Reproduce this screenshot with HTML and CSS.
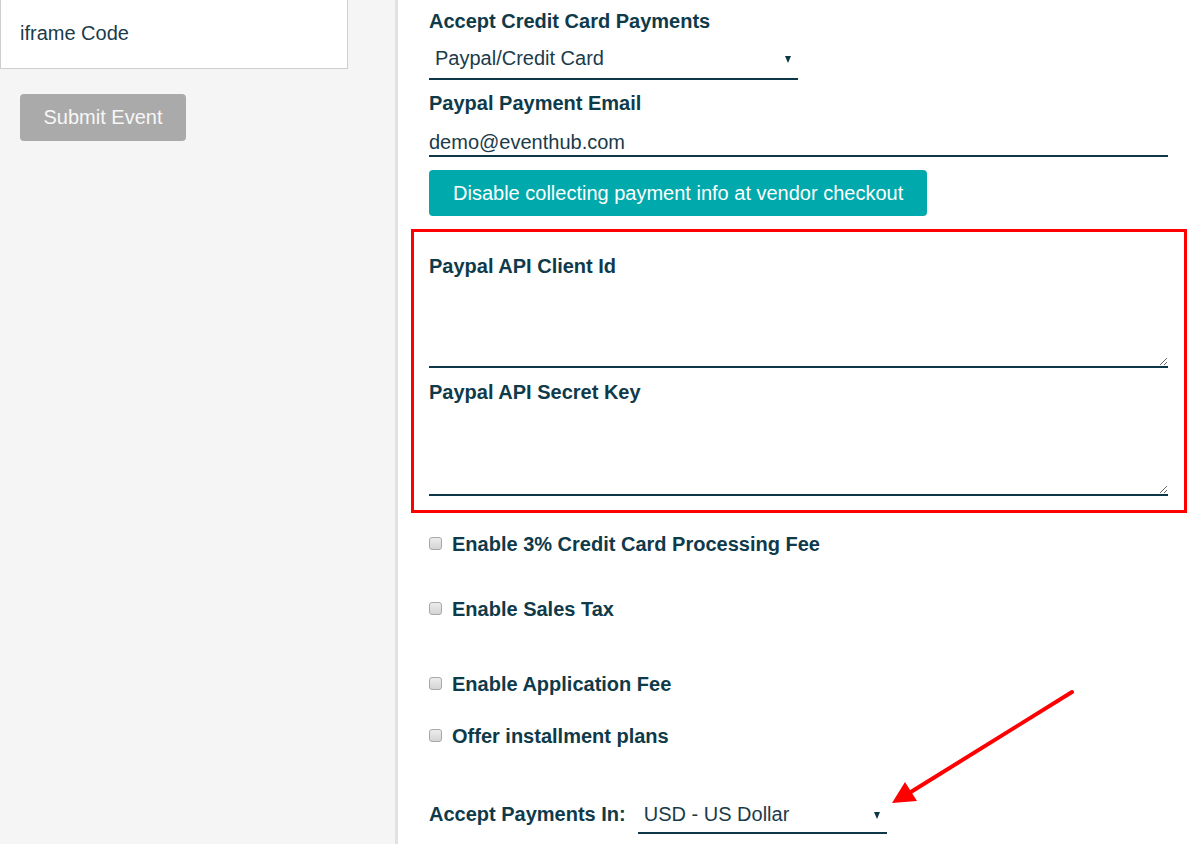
FILE: index.html
```html
<!DOCTYPE html>
<html lang="en">
<head>
<meta charset="utf-8">
<title>Event payment settings</title>
<link rel="stylesheet" href="styles.css">
</head>
<body>
<div class="page">
  <aside class="sidebar">
    <div class="card">iframe Code</div>
    <button class="submit" type="button">Submit Event</button>
  </aside>

  <main class="main">
    <div class="label first">Accept Credit Card Payments</div>
    <div class="select pay-method">
      <span class="select-text">Paypal/Credit Card</span>
      <span class="caret"></span>
    </div>

    <div class="label email-label">Paypal Payment Email</div>
    <div class="text-input">demo@eventhub.com</div>

    <button class="teal-btn" type="button">Disable collecting payment info at vendor checkout</button>

    <section class="highlight">
      <div class="label">Paypal API Client Id</div>
      <textarea class="area"></textarea>
      <div class="label area-label">Paypal API Secret Key</div>
      <textarea class="area area-second"></textarea>
    </section>

    <label class="check row-fee"><input type="checkbox" class="box"><span>Enable 3% Credit Card Processing Fee</span></label>
    <label class="check row-tax"><input type="checkbox" class="box"><span>Enable Sales Tax</span></label>
    <label class="check row-app"><input type="checkbox" class="box"><span>Enable Application Fee</span></label>
    <label class="check row-inst"><input type="checkbox" class="box"><span>Offer installment plans</span></label>

    <div class="currency-row">
      <div class="label inline">Accept Payments In:</div>
      <div class="select currency">
        <span class="select-text">USD - US Dollar</span>
        <span class="caret"></span>
      </div>
    </div>
  </main>

  <svg class="annotation" width="1198" height="844" viewBox="0 0 1198 844">
    <line x1="1072" y1="692" x2="906" y2="795" stroke="#ff0000" stroke-width="4" stroke-linecap="round"/>
    <polygon points="892,803 905,782 917,801" fill="#ff0000"/>
  </svg>
</div>
</body>
</html>
```

FILE: styles.css
```css
html, body {
  margin: 0;
  padding: 0;
  background: #ffffff;
}

body {
  font-family: "Liberation Sans", Arial, sans-serif;
  font-size: 20px;
  color: #123b4b;
  overflow: hidden;
}

.page {
  position: relative;
  display: flex;
  width: 1198px;
  height: 844px;
}

/* ---------- sidebar ---------- */
.sidebar {
  width: 395px;
  flex: 0 0 395px;
  background: #f5f5f5;
  border-right: 3px solid #e2e2e2;
}

.card {
  box-sizing: border-box;
  width: 348px;
  height: 69px;
  background: #ffffff;
  border: 1px solid #cfcfcf;
  border-top: 0;
  padding: 20px 0 22px 19px;
  line-height: 26px;
  color: #1b3a4a;
}

.submit {
  display: block;
  margin: 25px 0 0 20px;
  width: 166px;
  height: 47px;
  border: 0;
  border-radius: 4px;
  background: #aaaaaa;
  color: #f7f7f7;
  font-family: "Liberation Sans", Arial, sans-serif;
  font-size: 20px;
  padding: 0;
}

/* ---------- main ---------- */
.main {
  flex: 1;
  padding: 8px 30px 0 31px;
}

.label {
  font-weight: bold;
  line-height: 26px;
  color: #0f3a4a;
}

.select {
  display: flex;
  align-items: center;
  justify-content: space-between;
  box-sizing: border-box;
  border-bottom: 2px solid #0d3646;
  line-height: 26px;
  padding: 5px 7px 7px 6px;
}

.pay-method {
  width: 369px;
  margin-top: 6px;
}

.caret {
  width: 0;
  height: 0;
  border-left: 3.5px solid transparent;
  border-right: 3.5px solid transparent;
  border-top: 7px solid #0d3646;
  margin-top: 2px;
}

.select-text {
  color: #1a3b4a;
}

.email-label {
  margin-top: 10px;
}

.text-input {
  margin-top: 13px;
  line-height: 26px;
  border-bottom: 2px solid #0d3646;
  color: #1a3b4a;
}

.teal-btn {
  display: block;
  margin: 13px 0 0 0;
  height: 46px;
  padding: 0 24px;
  border: 0;
  border-radius: 4px;
  background: #00a9ac;
  color: #ffffff;
  font-family: "Liberation Sans", Arial, sans-serif;
  font-size: 20px;
}

.highlight {
  margin: 13px -19px 0 -18px;
  border: 3px solid #ff0000;
  padding: 21px 16px 14px 15px;
}

.area {
  display: block;
  box-sizing: border-box;
  width: 100%;
  margin: 1px 0 0 0;
  height: 88px;
  border: 0;
  border-bottom: 2px solid #0d3646;
  resize: vertical;
  background: #ffffff;
  font-family: "Liberation Sans", Arial, sans-serif;
  font-size: 20px;
  outline: none;
}

.area-second {
  height: 90px;
}

.area-label {
  margin-top: 11px;
}

/* ---------- checkboxes ---------- */
.check {
  display: flex;
  align-items: flex-start;
  font-weight: bold;
  line-height: 26px;
  color: #0f3a4a;
}

.box {
  appearance: none;
  -webkit-appearance: none;
  box-sizing: border-box;
  width: 13px;
  height: 13px;
  margin: 6px 10px 0 0;
  border: 1px solid #a8a8a8;
  border-radius: 3px;
  background: linear-gradient(#ececec, #d4d4d4);
  flex: 0 0 13px;
}

.row-fee { margin-top: 18px; }
.row-tax { margin-top: 39px; }
.row-app { margin-top: 49px; }
.row-inst { margin-top: 26px; }

/* ---------- currency ---------- */
.currency-row {
  display: flex;
  align-items: flex-start;
  gap: 12px;
  margin-top: 47px;
}

.inline {
  padding-top: 5px;
}

.currency {
  width: 249px;
  padding: 5px 7px 5px 6px;
}

/* ---------- annotation overlay ---------- */
.annotation {
  position: absolute;
  left: 0;
  top: 0;
  pointer-events: none;
}
```
